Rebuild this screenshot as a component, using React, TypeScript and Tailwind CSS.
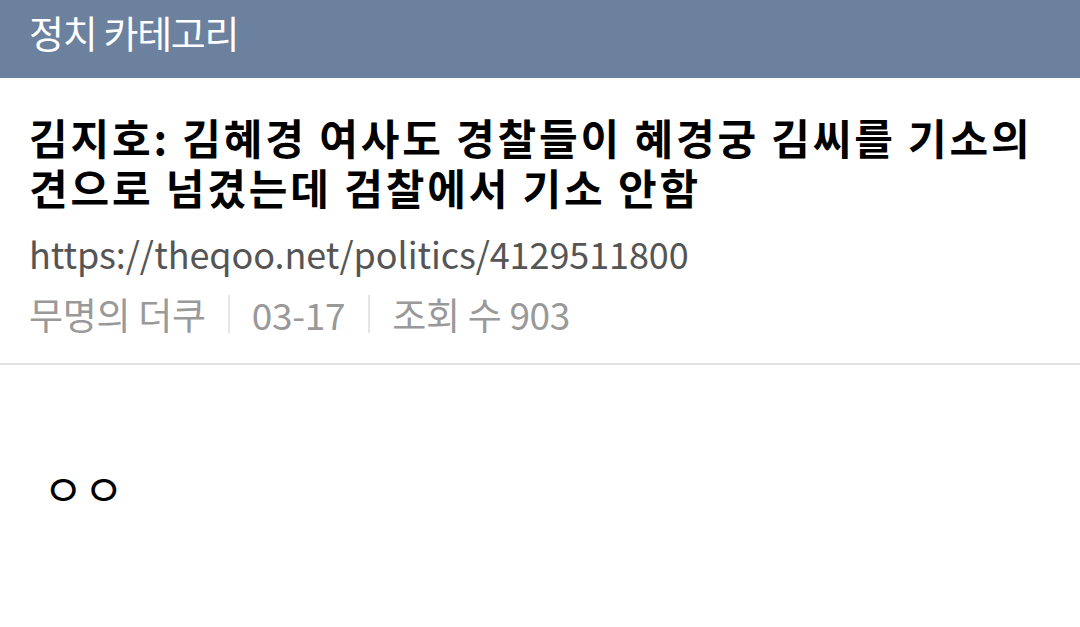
import React from 'react';

const font = { fontFamily: '"Noto Sans CJK KR", "Noto Sans", sans-serif' };

export default function App() {
  return (
    <div className="w-[1080px] h-[627px] bg-white overflow-hidden" style={font}>
      <div className="h-[78px] bg-[#6b819e] flex items-center px-[29px]">
        <span className="text-white text-[38px] leading-none tracking-[-1.3px] -mt-[14px]">정치 카테고리</span>
      </div>
      <div className="px-[29px] pt-[34px] pb-[25px] border-b-2 border-[#e2e2e2]">
        <h1 className="text-[42px] font-bold leading-[50px] text-black tracking-[2.85px] whitespace-nowrap">
          김지호: 김혜경 여사도 경찰들이 혜경궁 김씨를 기소의
          <br />
          견으로 넘겼는데 검찰에서 기소 안함
        </h1>
        <div className="mt-[17px] text-[36px] leading-[48px] text-[#555] tracking-[-0.1px]">
          https://theqoo.net/politics/4129511800
        </div>
        <div className="mt-[13px] flex items-center text-[37px] leading-[48px] text-[#999] tracking-[-0.3px]">
          <span>무명의 더쿠</span>
          <span className="ml-[22px] mr-[22px] w-[2px] h-[38px] bg-[#e6e6e6]" />
          <span>03-17</span>
          <span className="ml-[23px] mr-[22px] w-[2px] h-[38px] bg-[#e6e6e6]" />
          <span>조회 수 903</span>
        </div>
      </div>
      <div className="px-[43px] pt-[93px] text-[44px] leading-[60px] text-black">ㅇㅇ</div>
    </div>
  );
}
